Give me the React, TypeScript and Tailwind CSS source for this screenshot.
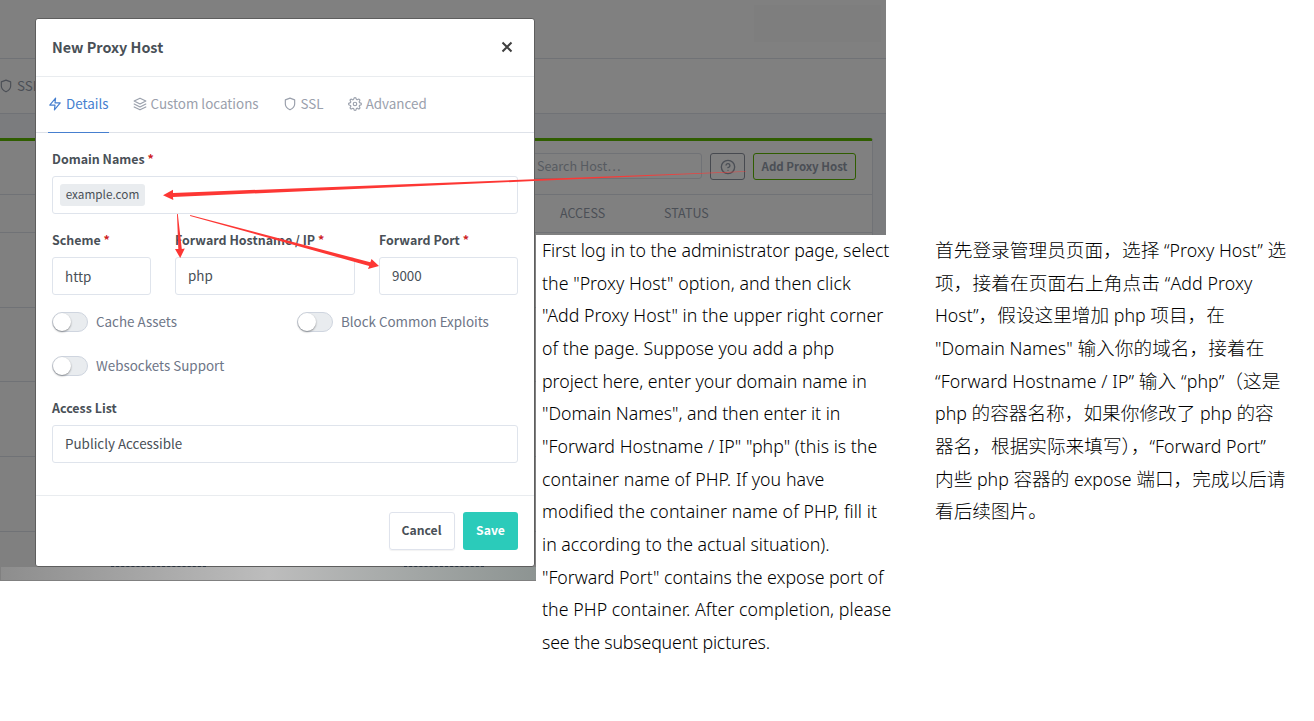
import type { ReactNode } from 'react';
import { FiHelpCircle, FiLayers, FiSettings, FiShield, FiZap } from 'react-icons/fi';

function Label({ children, required }: { children: ReactNode; required?: boolean }) {
  return (
    <div className="h-[17px] text-[12.45px] leading-[17px] font-bold whitespace-nowrap text-[#495057]">
      {children}
      {required && <span className="text-[#cd201f]"> *</span>}
    </div>
  );
}

function Field({
  label,
  value,
  required,
  width,
  pad = 'pb-0.5',
}: {
  label: string;
  value: string;
  required?: boolean;
  width: string;
  pad?: string;
}) {
  return (
    <div className={width}>
      <Label required={required}>{label}</Label>
      <div
        className={`mt-2 flex h-[38px] items-center rounded-[3px] border border-[#dfe4ec] pl-3 text-[13.4px] leading-5 text-[#495057] ${pad}`}
      >
        {value}
      </div>
    </div>
  );
}

function Toggle({ label, width }: { label: string; width: string }) {
  return (
    <div className={`flex h-5 items-center ${width}`}>
      <span className="flex h-5 w-9 items-center rounded-full border border-[#cfd5df] bg-[#e9ecef]">
        <span className="h-[18px] w-[18px] rounded-full bg-white shadow-[0_1px_2px_rgba(0,0,0,0.4)]" />
      </span>
      <span className="ml-2 pb-0.5 text-[13.4px] leading-5 whitespace-nowrap text-[#6e7687]">{label}</span>
    </div>
  );
}

function Tab({ icon, label, active, margin }: { icon: ReactNode; label: string; active?: boolean; margin: string }) {
  return (
    <div
      className={`flex h-14 items-center gap-1 border-b pb-0.5 whitespace-nowrap ${margin} ${
        active ? 'border-[#467fcf] text-[#467fcf]' : 'border-transparent text-[#9aa0ac]'
      }`}
    >
      {icon}
      <span className="pb-0.5 text-[13.4px] leading-5">{label}</span>
    </div>
  );
}

function Backdrop() {
  return (
    <div className="h-[235px] w-[886px] overflow-hidden bg-[#7b7c7e] text-[#4b4f56]">
      <div className="flex h-[59px] justify-end border-b border-[#707276] bg-[#808080] pt-[5px] pr-[5px]">
        <div className="h-[37px] w-[127px] bg-[#7e7e7e]" />
      </div>
      <div className="flex h-[55px] items-center border-b border-[#707276] bg-[#808080]">
        <FiShield size={14} className="-ml-px" />
        <span className="ml-1 pb-0.5 text-[13.4px] leading-5">SSL</span>
      </div>
      <div className="mt-6 h-[97px] w-[873px] rounded-tr-[3px] border-t-[3px] border-r border-t-[#2f5d00] border-r-[#707276] bg-[#808080]">
        <div className="flex h-[54px] items-start justify-end border-b border-[#707276] pt-3 pr-4">
          <div className="mr-2 flex h-[26px] w-[180px] items-center rounded-[3px] border border-[#707276] pl-[14px] text-[12.6px] leading-5 text-[#575b61]">
            Search Host…
          </div>
          <div className="mr-2 flex h-[27px] w-[35px] items-center justify-center rounded-[3px] border border-[#474a50]">
            <FiHelpCircle size={16} />
          </div>
          <div className="flex h-[27px] w-[103px] items-center justify-center rounded-[3px] border border-[#2f5d00] pb-0.5 text-[11.5px] leading-5 font-bold whitespace-nowrap">
            Add Proxy Host
          </div>
        </div>
        <div className="flex h-[38px] items-center border-b border-[#707276] pb-0.5 text-[12.5px] leading-5">
          <span className="ml-[560px] w-[104px]">ACCESS</span>
          <span>STATUS</span>
        </div>
      </div>
    </div>
  );
}

function BackdropRows() {
  return (
    <div className="flex h-[346px] w-[536px] shrink-0 flex-col bg-[#808080]">
      <div className="h-[73px] border-b border-[#707276]" />
      <div className="h-[74px] border-b border-[#707276]" />
      <div className="h-[75px] border-b border-[#707276]" />
      <div className="h-[75px] border-b border-[#707276]" />
      <div className="h-[35px]" />
      <div className="ml-px h-[13px] bg-linear-to-r from-[#8d8d8d] via-[#bdbdbd] to-[#8d9492]" />
    </div>
  );
}

function Modal() {
  return (
    <div className="absolute top-[18px] left-[35px] flex h-[549px] w-[500px] flex-col rounded-[3px] border border-[#5e5e5e] bg-white">
      <div className="flex h-[58px] items-center justify-between border-b border-[#e9ecef] pr-[21px] pb-0.5 pl-4">
        <span className="text-[14.4px] leading-6 font-bold text-[#495057]">New Proxy Host</span>
        <svg width="12" height="12" viewBox="0 0 12 12" className="text-[#404040]">
          <path d="M1.5 1.5 10.5 10.5M10.5 1.5 1.5 10.5" stroke="currentColor" strokeWidth="2" />
        </svg>
      </div>
      <div className="flex h-14 border-b border-[#dee2e9] pl-3">
        <Tab icon={<FiZap size={14} />} label="Details" active margin="" />
        <Tab icon={<FiLayers size={14} />} label="Custom locations" margin="ml-6" />
        <Tab icon={<FiShield size={14} />} label="SSL" margin="ml-6" />
        <Tab icon={<FiSettings size={14} />} label="Advanced" margin="ml-6" />
      </div>
      <div className="grow px-4 pt-[18px]">
        <Label required>Domain Names</Label>
        <div className="mt-2 flex h-[38px] items-center rounded-[3px] border border-[#dfe4ec] pl-[7px]">
          <span className="flex h-[22px] w-[85px] items-center justify-center rounded-[3px] bg-[#e9ecef] pb-0.5 text-[11.75px] leading-5 text-[#495057]">
            example.com
          </span>
        </div>
        <div className="mt-[18px] flex gap-6">
          <Field label="Scheme" value="http" required width="w-[99px]" pad="" />
          <Field label="Forward Hostname / IP" value="php" required width="w-[180px]" />
          <Field label="Forward Port" value="9000" required width="w-[139px]" />
        </div>
        <div className="mt-[17px] flex">
          <Toggle label="Cache Assets" width="w-[245px]" />
          <Toggle label="Block Common Exploits" width="w-[221px]" />
        </div>
        <div className="mt-6 mb-6">
          <Toggle label="Websockets Support" width="w-[245px]" />
        </div>
        <Field label="Access List" value="Publicly Accessible" width="w-full" />
      </div>
      <div className="flex h-[71px] items-start justify-end gap-2 border-t border-[#e9ecef] px-4 pt-4 text-[12.2px] leading-5 font-bold">
        <div className="flex h-[38px] w-[66px] items-center justify-center rounded-[3px] border border-[#dfe3ec] pr-px pb-0.5 text-[#495057] shadow-[0_1px_1px_rgba(0,0,0,0.05)]">
          Cancel
        </div>
        <div className="flex h-[38px] w-[55px] items-center justify-center rounded-[3px] bg-[#2bcbba] pb-0.5 text-white">
          Save
        </div>
      </div>
      <div className="absolute -bottom-px left-[75px] w-[95px] border-t border-dashed border-[#26303c]" />
      <div className="absolute -bottom-px left-[368px] w-[80px] border-t border-dashed border-[#26303c]" />
    </div>
  );
}

function Arrows() {
  return (
    <svg width="886" height="300" viewBox="0 0 886 300" className="pointer-events-none absolute top-0 left-0">
      <defs>
        <linearGradient id="tail" gradientUnits="userSpaceOnUse" x1="163" y1="0" x2="750" y2="0">
          <stop offset="0.7" stopColor="#fd3734" />
          <stop offset="1" stopColor="#fd3734" stopOpacity="0.7" />
        </linearGradient>
      </defs>
      <path d="M163 195.2 173 189.8 173 193 534 179.3 746 171.2 746 171.8 534 181 173 197 173.3 200Z" fill="url(#tail)" />
      <path d="M177 214 177.8 214 181.8 249 184.8 248.5 180.2 258 175 249 178.3 249Z" fill="#fd3734" />
      <path d="M190 215 190.2 215.9 369.2 266 368 269 379 266 371.5 259 370.3 262.3Z" fill="#fd3734" />
    </svg>
  );
}

const english = [
  { text: 'First log in to the administrator page, select', tracking: 'tracking-[-0.05px]' },
  { text: 'the "Proxy Host" option, and then click', tracking: 'tracking-[0.03px]' },
  { text: '"Add Proxy Host" in the upper right corner', tracking: 'tracking-[0.03px]' },
  { text: 'of the page. Suppose you add a php', tracking: 'tracking-[0.03px]' },
  { text: 'project here, enter your domain name in', tracking: 'tracking-[-0.03px]' },
  { text: '"Domain Names", and then enter it in', tracking: 'tracking-[-0.05px]' },
  { text: '"Forward Hostname / IP" "php" (this is the', tracking: 'tracking-[0.03px]' },
  { text: 'container name of PHP. If you have', tracking: 'tracking-[0.06px]' },
  { text: 'modified the container name of PHP, fill it', tracking: 'tracking-[0.08px]' },
  { text: 'in according to the actual situation).', tracking: 'tracking-[0px]' },
  { text: '"Forward Port" contains the expose port of', tracking: 'tracking-[-0.05px]' },
  { text: 'the PHP container. After completion, please', tracking: 'tracking-[0.05px]' },
  { text: 'see the subsequent pictures.', tracking: 'tracking-[-0.16px]' },
];

const chinese = [
  { text: '首先登录管理员页面，选择 “Proxy Host” 选', tracking: 'tracking-[0.04px]' },
  { text: '项，接着在页面右上角点击 “Add Proxy', tracking: 'tracking-[0.1px]' },
  { text: 'Host”，假设这里增加 php 项目，在', tracking: 'tracking-[0px]' },
  { text: '"Domain Names" 输入你的域名，接着在', tracking: 'tracking-[0.04px]' },
  { text: '“Forward Hostname / IP” 输入 “php”（这是', tracking: 'tracking-[0.1px]' },
  { text: 'php 的容器名称，如果你修改了 php 的容', tracking: 'tracking-[0px]' },
  { text: '器名，根据实际来填写），“Forward Port”', tracking: 'tracking-[0px]' },
  { text: '内些 php 容器的 expose 端口，完成以后请', tracking: 'tracking-[0px]' },
  { text: '看后续图片。', tracking: 'tracking-[0px]' },
];

// Latin runs are set slightly smaller than the CJK text around them.
function NoteLine({ text, tracking }: { text: string; tracking: string }) {
  return (
    <div className={`h-[32.67px] ${tracking} ${text.includes('”（') ? '[text-spacing-trim:space-all]' : ''}`}>
      {text.split(/([\u0020-\u007e“”]+)/).map((run, i) =>
        i % 2 ? (
          <span key={i} className="text-[17.75px]">
            {run}
          </span>
        ) : (
          run
        ),
      )}
    </div>
  );
}

function Note({ lines, className }: { lines: { text: string; tracking: string }[]; className: string }) {
  return (
    <div
      className={`-mt-px font-['Noto_Sans','Noto_Sans_CJK_SC',sans-serif] text-[18.67px] leading-[32.67px] font-light whitespace-pre text-black ${className}`}
    >
      {lines.map((line) => (
        <NoteLine key={line.text} text={line.text} tracking={line.tracking} />
      ))}
    </div>
  );
}

export default function App() {
  return (
    <div className="relative h-[721px] w-[1314px] overflow-hidden bg-white font-['Noto_Sans_CJK_SC',sans-serif]">
      <Backdrop />
      <div className="flex">
        <BackdropRows />
        <Note lines={english} className="w-[399px] pl-1.5" />
        <Note lines={chinese} className="" />
      </div>
      <Modal />
      <Arrows />
    </div>
  );
}
